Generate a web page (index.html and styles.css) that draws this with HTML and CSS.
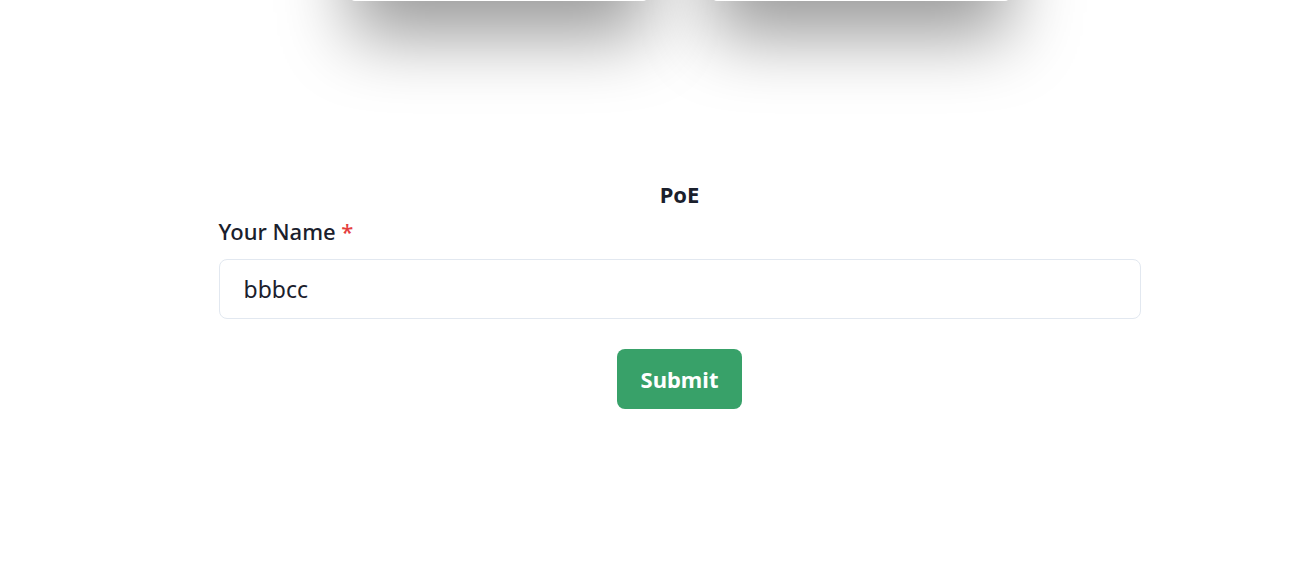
FILE: index.html
```html
<!DOCTYPE html>
<html>
<head>
<meta charset="utf-8">
<link rel="stylesheet" href="styles.css">
</head>
<body>
<div class="page">
  <div class="cards">
    <div class="card"></div>
    <div class="card"></div>
  </div>
  <form class="form">
    <div class="title">PoE</div>
    <label class="label">Your Name <span class="req">*</span></label>
    <input class="input" type="text" value="bbbcc">
    <div class="actions">
      <button class="btn" type="button">Submit</button>
    </div>
  </form>
</div>
</body>
</html>
```
FILE: styles.css
```css
* { box-sizing: border-box; }
html, body { margin: 0; padding: 0; background: #fff; }
body {
  font-family: "Noto Sans", "Open Sans", sans-serif;
  color: #1a202c;
  overflow: hidden;
}
.page {
  padding-left: 65px;
  display: flex;
  flex-direction: column;
  align-items: center;
}
.cards {
  display: flex;
  gap: 66px;
  margin-top: -200px;
}
.card {
  width: 296px;
  height: 201px;
  background: #fff;
  border-radius: 4px;
  box-shadow: 0 35px 70px rgba(0,0,0,0.4);
}
.form {
  width: 922px;
  margin-top: 180px;
  display: flex;
  flex-direction: column;
}
.title {
  text-align: center;
  font-weight: 700;
  font-size: 22px;
  line-height: 26px;
}
.label {
  font-size: 22px;
  font-weight: 500;
  line-height: 32px;
  margin-top: 8px;
}
.req { color: #e53e3e; }
.input {
  margin-top: 12px;
  height: 60px;
  border: 1px solid #e2e8f0;
  border-radius: 8px;
  padding: 0 24px;
  font-family: inherit;
  font-size: 23px;
  color: #1a202c;
  outline: none;
}
.actions {
  display: flex;
  justify-content: center;
  margin-top: 30px;
}
.btn {
  width: 125px;
  height: 60px;
  border: none;
  border-radius: 8px;
  background: #38a169;
  color: #fff;
  font-family: inherit;
  font-weight: 700;
  font-size: 22px;
}
```
